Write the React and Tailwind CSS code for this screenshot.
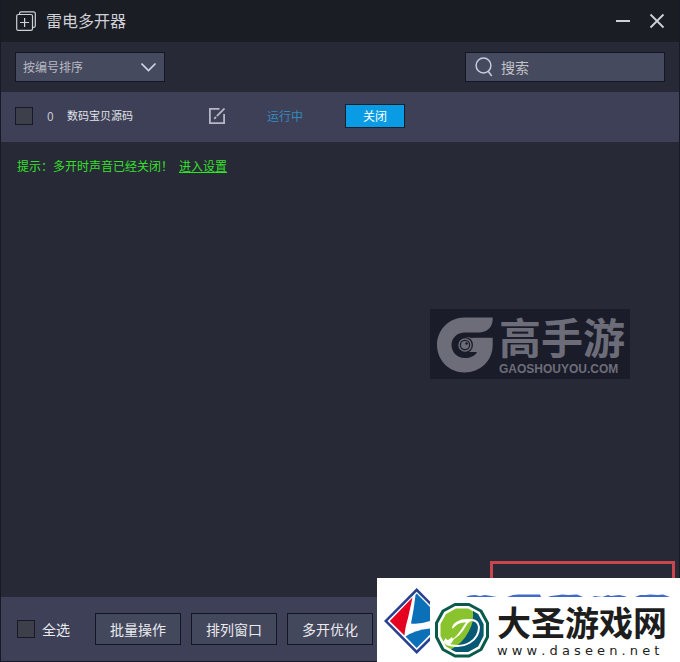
import React, { useState } from "react";

const instances = [{ id: 0, name: "数码宝贝源码", status: "运行中" }];
const batchActions = ["批量操作", "排列窗口", "多开优化"];

function TitleBar() {
  return (
    <header className="flex h-[42px] items-center bg-[#1b1d25] pl-[15px] pr-2.5 text-[#d0d1d6]">
      <svg className="h-5 w-5" viewBox="0 0 20 20" fill="none" stroke="currentColor" strokeWidth="1.2">
        <path d="M3.6 3.4V2.2Q3.6 .8 5 .8H17.4Q19.3 .8 19.3 2.7V14.8Q19.3 16.3 17.8 16.3H16.6" />
        <rect x=".7" y="3.5" width="15.8" height="15.8" rx="1.6" />
        <path d="M8.6 7v9M4.1 11.5h9" />
      </svg>
      <h1 className="ml-2.5 pb-0.5 text-base leading-5">雷电多开器</h1>
      <div className="ml-auto flex items-center gap-3">
        <button type="button" aria-label="最小化" className="flex h-6 w-5 items-center justify-center">
          <svg className="h-4 w-4" viewBox="0 0 16 16" stroke="currentColor" strokeWidth="2">
            <path d="M1 8h14" />
          </svg>
        </button>
        <button type="button" aria-label="关闭窗口" className="flex h-6 w-6 items-center justify-center">
          <svg className="h-4 w-4" viewBox="0 0 16 16" stroke="currentColor" strokeWidth="1.8">
            <path d="M1.5 1.5l13 13M14.5 1.5l-13 13" />
          </svg>
        </button>
      </div>
    </header>
  );
}

function Toolbar() {
  return (
    <div className="flex h-[50px] items-center justify-between px-3.5">
      <div className="relative w-[150px]">
        <select
          aria-label="排序"
          className="block h-[30px] w-full appearance-none rounded-none border border-[#131624] bg-[#464a5e] pl-[7px] pr-8 text-xs text-[#b9bac4]"
        >
          <option>按编号排序</option>
        </select>
        <svg
          className="pointer-events-none absolute right-2 top-2 h-4 w-4 text-[#d3d5e6]"
          viewBox="0 0 16 16"
          fill="none"
          stroke="currentColor"
          strokeWidth="1.6"
        >
          <path d="M.5 3.5l7 7 7-7" />
        </svg>
      </div>
      <label className="flex h-[30px] w-[200px] items-center border border-[#131624] bg-[#464a5e] pl-[9px]">
        <svg
          className="h-5 w-[18px] shrink-0 text-[#c9cbe0]"
          viewBox="0 0 18 20"
          fill="none"
          stroke="currentColor"
          strokeWidth="1.5"
        >
          <circle cx="8.5" cy="8.5" r="7.4" />
          <path d="M13 14l3.7 5" />
        </svg>
        <input
          type="text"
          aria-label="搜索"
          placeholder="搜索"
          className="ml-2 w-full min-w-0 bg-transparent text-sm outline-none placeholder:text-[#c3c4ca]"
        />
      </label>
    </div>
  );
}

function CheckBox({ id, label, checked, onChange }) {
  return (
    <input
      id={id}
      type="checkbox"
      aria-label={label}
      checked={checked}
      onChange={onChange}
      className="h-[18px] w-[18px] shrink-0 appearance-none border border-[#171a26] bg-[#3d3f4b] checked:bg-[#0a9be5]"
    />
  );
}

function InstanceRow({ item, checked, onToggle }) {
  return (
    <li className="flex h-[50px] items-center bg-[#3d4056] pb-[3px] pl-3.5 text-xs">
      <CheckBox label={item.name} checked={checked} onChange={onToggle} />
      <span className="ml-3.5 w-5 text-[#c6c7d0]">{item.id}</span>
      <span className="w-[142px] text-[11px] text-[#e2e3e9]">{item.name}</span>
      <button type="button" aria-label="编辑" className="text-[#b5b7c6]">
        <svg className="h-4 w-4" viewBox="0 0 16 16" fill="none" stroke="currentColor" strokeWidth="1.8">
          <path d="M10.5 .9H.9v14.2h14.2V6" />
          <path d="M15.5 .5L7.8 8.2M7 9L5.2 10.8" />
        </svg>
      </button>
      <span className="ml-[42px] w-[78px] text-[#3788be]">{item.status}</span>
      <button type="button" className="h-6 w-[60px] border border-[#10202f] bg-[#0a9be5] text-xs text-white">
        关闭
      </button>
    </li>
  );
}

function GaoshouyouMark() {
  return (
    <div className="absolute right-[50px] top-[309px] flex h-[70px] w-[200px] items-start bg-[#1b1c29] pl-[7px] pt-2 text-[#6c6d79]">
      <svg className="h-14 w-14 shrink-0" viewBox="0 0 56 56">
        <path fill="currentColor" d="M56 .5H27.5C12 .5 0 13 0 28s12 27.5 27.5 27.5S55.7 44 55.7 28V.5Z" />
        <path
          fill="#1b1c29"
          d="M56.5 0Q55 15.5 42 15.5H28C20 15.5 14.5 21 14.5 28S20 41 28 41c5 0 10-2 12-6H30a7.5 7.5 0 1 1 4-14Q35.5 20.8 37.5 20.8H56.5Z"
        />
        <circle cx="28" cy="28" r="8" fill="#1b1c29" />
        <circle cx="28" cy="28" r="6" fill="none" stroke="currentColor" strokeWidth="1.4" />
        <circle cx="28" cy="28" r="4" fill="currentColor" />
        <circle cx="29.6" cy="26.5" r="1.3" fill="#1b1c29" />
      </svg>
      <div className="ml-1.5 font-['Liberation_Sans','Noto_Sans_CJK_SC',sans-serif] font-bold">
        <p className="text-[42px] leading-[46px]">高手游</p>
        <p className="text-xs leading-3">GAOSHOUYOU.COM</p>
      </div>
    </div>
  );
}

function DaseenMark() {
  return (
    <div className="absolute bottom-0 right-0 flex h-[84px] w-[303px] items-end bg-white text-[#1d1d1d]">
      <svg className="absolute left-[89px] top-4 h-1 w-[205px]" viewBox="0 0 205 4" fill="#4169cb">
        <path d="M0 3Q3 1 9 1l5 1 5-1 6 1 6 1ZM41 3l6-2 5-.5 16 0 6 0 1 2.5ZM82 3l3-1 8-1 3-.5 6 .5 9-.5 6 2.5ZM126 3l3-1 7 1 6-2 3 1 8-1 5 1 3 1ZM169 3l5-2 6 0 4-.5 8 .5 5-.5 7 2.5Z" />
      </svg>
      <svg className="h-[84px] w-[120px] shrink-0" viewBox="0 0 120 84">
        <path d="M53 23.5L39.7 10 7 43l32.7 33L53 62.7Z" fill="#27408f" />
        <path d="M53 27L39.7 13.7 10.5 43l29.2 29.3L53 59Z" fill="#fff" />
        <path d="M35.5 19.5L12.8 43 27.5 57.5Q28 50 31 40Z" fill="#e60020" />
        <path d="M39.7 15.5L53 29v14Q43 46.5 34 45.5 37 31 38.5 17Z" fill="#0b70b8" />
        <path d="M28.5 58.5Q38 52 53 50.5V56.5L39.7 70Z" fill="#0b70b8" />
        <path
          d="M78 26.5h14L104 33l6.500 12v14L104 71.500 92 78H78L66 71.500 59.500 59V45L66 33Z"
          fill="#fff"
          stroke="#0a5a4b"
          strokeWidth="3"
          strokeLinejoin="round"
        />
        <path
          d="M79 30.5h12L101 36l5.500 10v12L101 68.500 91 74H79L69 68.500 63.500 58V46L69 36Z"
          fill="#89c42e"
        />
        <path d="M96 33l5 3 5.500 10v12L101 68.500 91 74H79l-5-2.500Q86 65 92 53 97 44 96 33Z" fill="#075875" />
        <path
          d="M75.500 51Q74 47 80 43.500 87 39.500 98 42q-6 .5-9 6-6 11-15 14.500Q80 58 84 52q3-5 5-7.500Q81 43.500 75.500 51Z"
          fill="#fff"
        />
        <path d="M65.500 64q2-1 3-4 1 2 2.500 2 2-1 4-3 0 2 2 2-2 4-5 6-4-.5-6.500-3Z" fill="#fff" />
        <path d="M92 42q9-1 10 7 0 10-9 15.500-10 6-24 1.500" fill="none" stroke="#fff" strokeWidth="2" />
      </svg>
      <div className="pb-[3px]">
        <p className="font-['Liberation_Sans','Noto_Sans_CJK_SC',sans-serif] text-[34px] font-bold leading-[38px]">
          大圣游戏网
        </p>
        <p className="font-['DejaVu_Sans',sans-serif] text-[13px] leading-4">w w w . d a s e e n . n e t</p>
      </div>
    </div>
  );
}

export default function App() {
  const [selected, setSelected] = useState([]);
  const allSelected = selected.length === instances.length;

  const toggle = (id) => {
    setSelected((prev) => (prev.includes(id) ? prev.filter((x) => x !== id) : [...prev, id]));
  };

  return (
    <div className="relative overflow-hidden font-['Noto_Sans_CJK_SC',sans-serif]">
      <div className="flex min-h-screen flex-col border-x border-b border-[#171a26] bg-[#272936]">
        <TitleBar />
        <Toolbar />
        <main className="flex-1">
          <ul>
            {instances.map((item) => (
              <InstanceRow
                key={item.id}
                item={item}
                checked={selected.includes(item.id)}
                onToggle={() => toggle(item.id)}
              />
            ))}
          </ul>
          <p className="flex gap-1.5 px-4 pt-4 text-xs text-[#35e02b]">
            <span>提示：多开时声音已经关闭！</span>
            <a href="#settings" className="underline">
              进入设置
            </a>
          </p>
        </main>
        <footer className="flex h-16 items-center bg-[#3d4056] pl-4 text-sm text-[#e9eaee]">
          <CheckBox
            id="select-all"
            checked={allSelected}
            onChange={() => setSelected(allSelected ? [] : instances.map((item) => item.id))}
          />
          <label htmlFor="select-all" className="ml-[7px] w-[53px]">
            全选
          </label>
          <div className="flex gap-2.5">
            {batchActions.map((action) => (
              <button key={action} type="button" className="h-8 w-[86px] border border-[#131624] bg-[#44485c]">
                {action}
              </button>
            ))}
          </div>
        </footer>
      </div>
      <div className="absolute bottom-[61px] right-[5px] h-10 w-[185px] border-[3px] border-[#c9474c]" />
      <GaoshouyouMark />
      <DaseenMark />
    </div>
  );
}
